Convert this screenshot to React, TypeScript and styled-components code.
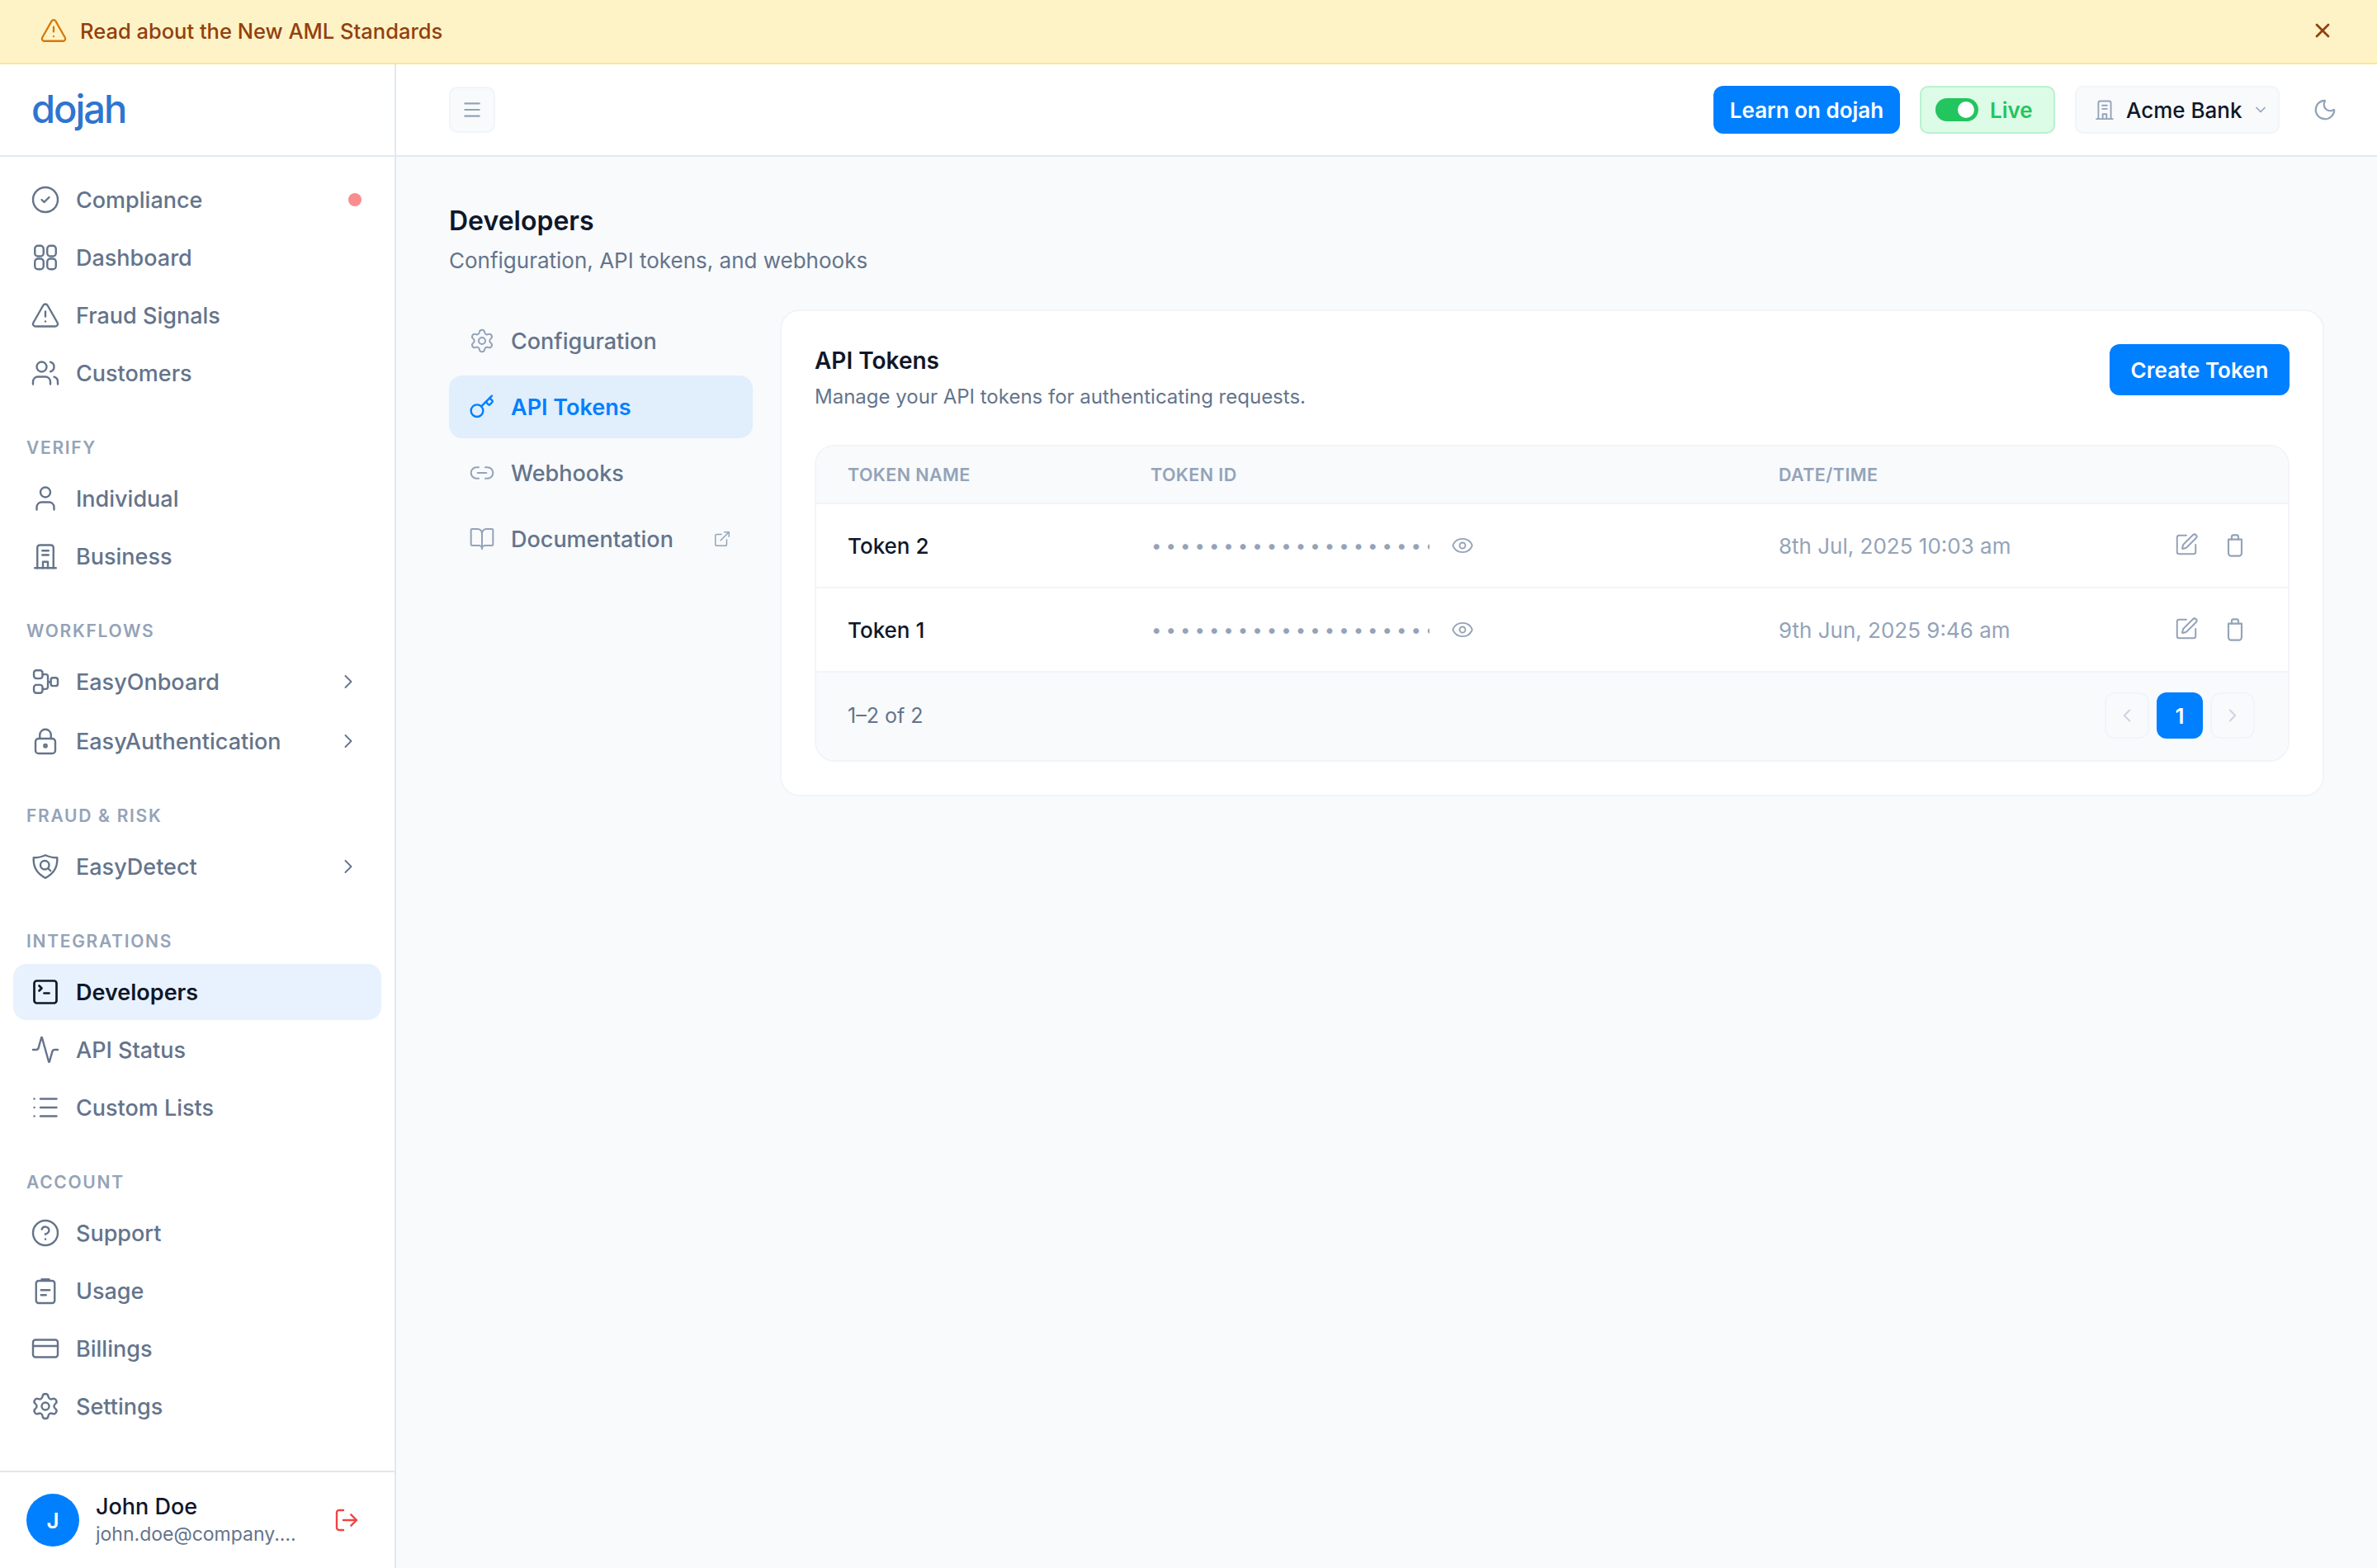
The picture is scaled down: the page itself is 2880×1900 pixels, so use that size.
import React from 'react';
import styled, { createGlobalStyle } from 'styled-components';
import {
  Activity,
  BookOpen,
  ChevronDown,
  ChevronLeft,
  ChevronRight,
  CircleCheck,
  CircleHelp,
  CreditCard,
  ExternalLink,
  Eye,
  Key,
  Link2,
  List,
  LogOut,
  Menu,
  Moon,
  Settings,
  SquarePen,
  SquareTerminal,
  TriangleAlert,
  User,
  Users,
  X,
} from 'lucide-react';

const GlobalStyle = createGlobalStyle`
  * { box-sizing: border-box; }
  html, body { margin: 0; padding: 0; }
  body {
    font-family: Inter, "Noto Sans", sans-serif;
    background-color: #f8fafc;
    color: #0f172a;
  }
`;

const Page = styled.div`
  display: flex;
  flex-direction: column;
  height: 1900px;
  width: 2880px;
  overflow: hidden;
`;

const Banner = styled.div`
  display: flex;
  align-items: center;
  justify-content: space-between;
  flex: 0 0 78px;
  padding: 0 52px 2px 48px;
  background-color: #fef3c7;
  border-bottom: 2px solid #fde68a;
  color: #92400e;
`;

const BannerText = styled.div`
  display: flex;
  align-items: center;
  gap: 15px;
  font-size: 25.5px;
  font-weight: 500;
  svg { color: #d97706; }
`;

const Shell = styled.div`
  display: flex;
  flex: 1;
  min-height: 0;
`;

const Sidebar = styled.aside`
  display: flex;
  flex-direction: column;
  flex: 0 0 480px;
  background-color: #fff;
  border-right: 2px solid #e2e8f0;
`;

const LogoBar = styled.div`
  display: flex;
  align-items: center;
  flex: 0 0 112px;
  padding: 0 0 4px 38px;
  border-bottom: 2px solid #e2e8f0;
`;

const Logo = styled.div`
  font-size: 47px;
  font-weight: 500;
  letter-spacing: -2px;
  color: #2f74d0;
`;

const Nav = styled.nav`
  flex: 1;
  padding: 18px 16px 0;
`;

const Group = styled.div<{ $gap?: number }>`
  display: flex;
  flex-direction: column;
  gap: ${props => props.$gap ?? 2}px;
`;

const GroupLabel = styled.div`
  display: flex;
  align-items: center;
  height: 32px;
  margin: 40px 0 12px 16px;
  font-size: 21px;
  font-weight: 600;
  letter-spacing: 1.7px;
  color: #94a3b8;
`;

const NavItem = styled.div<{ $active?: boolean }>`
  display: flex;
  align-items: center;
  gap: 19px;
  height: 68px;
  padding: 0 26px 0 21px;
  border-radius: 16px;
  font-size: 27px;
  font-weight: 500;
  background-color: ${props => (props.$active ? '#e8f2fe' : 'transparent')};
  color: ${props => (props.$active ? '#0f172a' : '#64748b')};
  font-weight: ${props => (props.$active ? 600 : 500)};
`;

const NavLabel = styled.span`
  flex: 1;
`;

const AlertDot = styled.span`
  width: 16px;
  height: 16px;
  margin-right: -2px;
  border-radius: 50%;
  background-color: #f87171;
  opacity: 0.8;
`;

const UserBar = styled.div`
  display: flex;
  align-items: center;
  flex: 0 0 118px;
  padding: 0 42px 0 32px;
  border-top: 2px solid #e2e8f0;
`;

const Avatar = styled.div`
  display: flex;
  align-items: center;
  justify-content: center;
  flex: 0 0 64px;
  height: 64px;
  border-radius: 50%;
  background-color: #007fff;
  color: #fff;
  font-size: 26px;
  font-weight: 600;
`;

const UserInfo = styled.div`
  flex: 1;
  margin-left: 20px;
  min-width: 0;
`;

const UserName = styled.div`
  font-size: 27px;
  font-weight: 500;
  line-height: 34px;
  color: #0f172a;
`;

const UserMail = styled.div`
  width: 248px;
  font-size: 23px;
  line-height: 32px;
  color: #64748b;
  white-space: nowrap;
  overflow: hidden;
  text-overflow: ellipsis;
`;

const Main = styled.main`
  display: flex;
  flex-direction: column;
  flex: 1;
  min-width: 0;
`;

const TopBar = styled.header`
  display: flex;
  align-items: center;
  flex: 0 0 112px;
  padding: 0 48px 0 64px;
  background-color: #fff;
  border-bottom: 2px solid #e2e8f0;
`;

const MenuButton = styled.div`
  display: flex;
  align-items: center;
  justify-content: center;
  width: 56px;
  height: 56px;
  border-radius: 10px;
  background-color: #f8fafc;
  border: 2px solid #f1f5f9;
  color: #94a3b8;
`;

const TopActions = styled.div`
  display: flex;
  align-items: center;
  margin-left: auto;
`;

const PrimaryButton = styled.div<{ $width: number; $height: number }>`
  display: flex;
  align-items: center;
  justify-content: center;
  width: ${props => props.$width}px;
  height: ${props => props.$height}px;
  border-radius: 12px;
  background-color: #007fff;
  color: #fff;
  font-size: 26px;
  font-weight: 600;
`;

const LiveBadge = styled.div`
  display: flex;
  align-items: center;
  gap: 14px;
  width: 164px;
  height: 58px;
  margin-left: 24px;
  padding-left: 17px;
  border-radius: 10px;
  background-color: #dcfce7;
  border: 2px solid #bbf0cf;
  color: #22c55e;
  font-size: 26px;
  font-weight: 600;
`;

const Toggle = styled.div`
  display: flex;
  align-items: center;
  justify-content: flex-end;
  width: 52px;
  height: 28px;
  padding-right: 5px;
  border-radius: 14px;
  background-color: #22c55e;
  &::after {
    content: '';
    width: 20px;
    height: 20px;
    border-radius: 50%;
    background-color: #fff;
  }
`;

const BankSelect = styled.div`
  display: flex;
  align-items: center;
  width: 248px;
  height: 58px;
  margin-left: 24px;
  padding-left: 20px;
  border-radius: 10px;
  background-color: #f8fafc;
  border: 2px solid #f1f5f9;
  font-size: 26px;
  font-weight: 500;
  color: #0f172a;
  svg { color: #94a3b8; flex: none; }
`;

const BankName = styled.span`
  margin: 0 12px 0 12px;
`;

const MoonSlot = styled.div`
  display: flex;
  margin-left: 40px;
  color: #94a3b8;
`;

const Content = styled.div`
  flex: 1;
  padding: 56px 64px 0;
`;

const PageTitle = styled.h1`
  margin: 0;
  font-size: 32px;
  line-height: 44px;
  font-weight: 600;
  color: #0f172a;
`;

const PageSubtitle = styled.p`
  margin: 6px 0 0;
  font-size: 26px;
  line-height: 40px;
  color: #64748b;
`;

const Body = styled.div`
  display: flex;
  gap: 33px;
  margin-top: 39px;
  align-items: flex-start;
`;

const SubNav = styled.div`
  display: flex;
  flex-direction: column;
  gap: 4px;
  flex: 0 0 368px;
`;

const SubNavItem = styled.div<{ $active?: boolean }>`
  display: flex;
  align-items: center;
  gap: 19px;
  height: 76px;
  padding: 0 26px 0 24px;
  border-radius: 16px;
  font-size: 27px;
  font-weight: 500;
  background-color: ${props => (props.$active ? '#e1eefc' : 'transparent')};
  color: ${props => (props.$active ? '#007fff' : '#64748b')};
  font-weight: ${props => (props.$active ? 600 : 500)};
  > svg:first-child { color: ${props => (props.$active ? '#007fff' : '#94a3b8')}; }
`;

const ExternalSlot = styled.span`
  display: flex;
  margin-left: auto;
  color: #94a3b8;
`;

const Card = styled.section`
  flex: 1;
  min-width: 0;
  padding: 40px;
  background-color: #fff;
  border: 2px solid #f1f5f9;
  border-radius: 24px;
`;

const CardHead = styled.div`
  display: flex;
  justify-content: space-between;
  align-items: flex-start;
  margin-bottom: 40px;
`;

const CardTitle = styled.h2`
  margin: 0;
  font-size: 28px;
  line-height: 40px;
  font-weight: 600;
  color: #0f172a;
`;

const CardSubtitle = styled.p`
  margin: 6px 0 0;
  font-size: 24px;
  line-height: 36px;
  color: #64748b;
`;

const Table = styled.div`
  border: 2px solid #f1f5f9;
  border-radius: 24px;
  overflow: hidden;
`;

const Row = styled.div`
  display: grid;
  grid-template-columns: 367px 761px 1fr auto;
  align-items: center;
  height: 102px;
  padding: 0 48px 0 38px;
  border-bottom: 2px solid #f1f5f9;
`;

const HeadRow = styled(Row)`
  height: 70px;
  background-color: #f8fafc;
`;

const HeadCell = styled.div`
  font-size: 21.5px;
  font-weight: 600;
  letter-spacing: 0.4px;
  color: #94a3b8;
`;

const TokenName = styled.div`
  font-size: 26px;
  font-weight: 500;
  color: #0f172a;
`;

const TokenId = styled.div`
  display: flex;
  align-items: center;
  color: #94a3b8;
`;

const Dots = styled.span`
  width: 337px;
  margin-left: 1px;
  margin-right: 26px;
  font-size: 22px;
  letter-spacing: 5.1px;
  white-space: nowrap;
  overflow: hidden;
`;

const DateCell = styled.div`
  font-size: 26px;
  color: #94a3b8;
`;

const RowActions = styled.div`
  display: flex;
  gap: 28px;
  color: #94a3b8;
`;

const TableFoot = styled.div`
  display: flex;
  align-items: center;
  justify-content: space-between;
  height: 106px;
  padding: 0 40px 2px 38px;
  background-color: #f8fafc;
  font-size: 25px;
  color: #64748b;
`;

const Pager = styled.div`
  display: flex;
  gap: 9px;
`;

const PagerButton = styled.div<{ $current?: boolean }>`
  display: flex;
  align-items: center;
  justify-content: center;
  width: ${props => (props.$current ? 56 : 54)}px;
  height: 56px;
  border-radius: 12px;
  font-size: 26px;
  font-weight: 600;
  border: ${props => (props.$current ? 'none' : '2px solid #f1f5f9')};
  background-color: ${props => (props.$current ? '#007fff' : 'transparent')};
  color: ${props => (props.$current ? '#fff' : '#cbd5e1')};
`;

type IconProps = { size?: number };

const Line: React.FC<IconProps & { children: React.ReactNode }> = ({ size = 36, children }) => (
  <svg
    width={size}
    height={size}
    viewBox="0 0 24 24"
    fill="none"
    stroke="currentColor"
    strokeWidth={1.6}
    strokeLinecap="round"
    strokeLinejoin="round"
    style={{ flex: 'none' }}
  >
    {children}
  </svg>
);

const GridIcon = () => (
  <Line>
    <rect x="3.5" y="2.5" width="7" height="8.5" rx="2.5" />
    <rect x="13.5" y="2.5" width="7" height="8.5" rx="2.5" />
    <rect x="3.5" y="13" width="7" height="8.5" rx="2.5" />
    <rect x="13.5" y="13" width="7" height="8.5" rx="2.5" />
  </Line>
);

const BuildingIcon: React.FC<IconProps> = ({ size }) => (
  <Line size={size}>
    <path d="M3.5 21.5h17" />
    <path d="M5.5 21.5V5a2 2 0 0 1 2-2h9a2 2 0 0 1 2 2v16.5" />
    <path d="M9.5 7.5h5M9.5 11h5" />
    <path d="M10 21.5v-5h4v5" />
  </Line>
);

const FlowIcon = () => (
  <Line>
    <rect x="2.7" y="2.8" width="7" height="6.6" rx="2" />
    <rect x="2.7" y="14.6" width="7" height="6.6" rx="2" />
    <rect x="16.4" y="8.8" width="5.6" height="6.6" rx="1.8" />
    <path d="M9.7 6.1h2.8a1.5 1.5 0 0 1 1.5 1.5v2.9a1.5 1.5 0 0 0 2.4 1.5" />
    <path d="M9.7 17.9h2.8a1.5 1.5 0 0 0 1.5-1.5v-3.9" />
  </Line>
);

const LockIcon = () => (
  <Line>
    <rect x="4" y="10" width="16" height="12" rx="2.5" />
    <path d="M7.5 10V7a4.5 4.5 0 0 1 9 0v3" />
    <circle cx="12" cy="15.8" r="1.1" />
  </Line>
);

const ShieldSearchIcon = () => (
  <Line>
    <path d="M12 2.8c3 1.5 6.3 2 9.5 2 .5 7-2.2 12.8-9.5 16.4C4.700 17.600 2 11.800 2.500 4.800c3.200 0 6.500-.5 9.500-2Z" />
    <circle cx="11.500" cy="10.800" r="3.500" />
    <path d="m14.200 13.500 2 2" />
  </Line>
);

const ClipboardIcon = () => (
  <Line>
    <rect x="4.500" y="4" width="15" height="18" rx="2" />
    <path d="M9 2.800h6" />
    <path d="M8.500 11.500h7M8.500 15.500h4" />
  </Line>
);

const TrashIcon = () => (
  <Line size={32}>
    <path d="M6 6.500h12V19a2.500 2.500 0 0 1-2.500 2.500h-7A2.500 2.500 0 0 1 6 19Z" />
    <path d="M9 6.500V4a1.500 1.500 0 0 1 1.500-1.500h3A1.500 1.500 0 0 1 15 4v2.500" />
  </Line>
);

const mainItems = [
  { label: 'Compliance', icon: <CircleCheck size={36} strokeWidth={1.6} />, alert: true },
  { label: 'Dashboard', icon: <GridIcon /> },
  { label: 'Fraud Signals', icon: <TriangleAlert size={36} strokeWidth={1.6} /> },
  { label: 'Customers', icon: <Users size={36} strokeWidth={1.6} /> },
];

const tokens = [
  { name: 'Token 2', date: '8th Jul, 2025 10:03 am' },
  { name: 'Token 1', date: '9th Jun, 2025 9:46 am' },
];

const App: React.FC = () => {
  return (
    <Page>
      <GlobalStyle />
      <Banner>
        <BannerText>
          <TriangleAlert size={34} strokeWidth={1.6} />
          Read about the New AML Standards
        </BannerText>
        <X size={28} strokeWidth={2.4} />
      </Banner>
      <Shell>
        <Sidebar>
          <LogoBar>
            <Logo>dojah</Logo>
          </LogoBar>
          <Nav>
            <Group>
              {mainItems.map(item => (
                <NavItem key={item.label}>
                  {item.icon}
                  <NavLabel>{item.label}</NavLabel>
                  {item.alert && <AlertDot />}
                </NavItem>
              ))}
            </Group>

            <GroupLabel>VERIFY</GroupLabel>
            <Group>
              <NavItem><User size={36} strokeWidth={1.6} /><NavLabel>Individual</NavLabel></NavItem>
              <NavItem><BuildingIcon /><NavLabel>Business</NavLabel></NavItem>
            </Group>

            <GroupLabel>WORKFLOWS</GroupLabel>
            <Group $gap={4}>
              <NavItem><FlowIcon /><NavLabel>EasyOnboard</NavLabel><ChevronRight size={28} strokeWidth={1.6} /></NavItem>
              <NavItem><LockIcon /><NavLabel>EasyAuthentication</NavLabel><ChevronRight size={28} strokeWidth={1.6} /></NavItem>
            </Group>

            <GroupLabel>FRAUD &amp; RISK</GroupLabel>
            <Group>
              <NavItem><ShieldSearchIcon /><NavLabel>EasyDetect</NavLabel><ChevronRight size={28} strokeWidth={1.6} /></NavItem>
            </Group>

            <GroupLabel>INTEGRATIONS</GroupLabel>
            <Group>
              <NavItem $active><SquareTerminal size={36} strokeWidth={1.8} /><NavLabel>Developers</NavLabel></NavItem>
              <NavItem><Activity size={36} strokeWidth={1.6} /><NavLabel>API Status</NavLabel></NavItem>
              <NavItem><List size={36} strokeWidth={1.6} /><NavLabel>Custom Lists</NavLabel></NavItem>
            </Group>

            <GroupLabel>ACCOUNT</GroupLabel>
            <Group>
              <NavItem><CircleHelp size={36} strokeWidth={1.6} /><NavLabel>Support</NavLabel></NavItem>
              <NavItem><ClipboardIcon /><NavLabel>Usage</NavLabel></NavItem>
              <NavItem><CreditCard size={36} strokeWidth={1.6} /><NavLabel>Billings</NavLabel></NavItem>
              <NavItem><Settings size={36} strokeWidth={1.6} /><NavLabel>Settings</NavLabel></NavItem>
            </Group>
          </Nav>
          <UserBar>
            <Avatar>J</Avatar>
            <UserInfo>
              <UserName>John Doe</UserName>
              <UserMail>john.doe@company.com</UserMail>
            </UserInfo>
            <LogOut size={32} strokeWidth={1.8} color="#ef4444" />
          </UserBar>
        </Sidebar>

        <Main>
          <TopBar>
            <MenuButton>
              <Menu size={26} strokeWidth={2} />
            </MenuButton>
            <TopActions>
              <PrimaryButton $width={226} $height={58}>Learn on dojah</PrimaryButton>
              <LiveBadge>
                <Toggle />
                Live
              </LiveBadge>
              <BankSelect>
                <BuildingIcon size={28} />
                <BankName>Acme Bank</BankName>
                <ChevronDown size={20} strokeWidth={2} />
              </BankSelect>
              <MoonSlot>
                <Moon size={30} strokeWidth={1.8} />
              </MoonSlot>
            </TopActions>
          </TopBar>

          <Content>
            <PageTitle>Developers</PageTitle>
            <PageSubtitle>Configuration, API tokens, and webhooks</PageSubtitle>
            <Body>
              <SubNav>
                <SubNavItem><Settings size={32} strokeWidth={1.5} />Configuration</SubNavItem>
                <SubNavItem $active><Key size={32} strokeWidth={1.8} />API Tokens</SubNavItem>
                <SubNavItem><Link2 size={32} strokeWidth={1.5} />Webhooks</SubNavItem>
                <SubNavItem>
                  <BookOpen size={32} strokeWidth={1.5} />
                  Documentation
                  <ExternalSlot><ExternalLink size={22} strokeWidth={1.6} /></ExternalSlot>
                </SubNavItem>
              </SubNav>

              <Card>
                <CardHead>
                  <div>
                    <CardTitle>API Tokens</CardTitle>
                    <CardSubtitle>Manage your API tokens for authenticating requests.</CardSubtitle>
                  </div>
                  <PrimaryButton $width={218} $height={62}>Create Token</PrimaryButton>
                </CardHead>

                <Table>
                  <HeadRow>
                    <HeadCell>TOKEN NAME</HeadCell>
                    <HeadCell>TOKEN ID</HeadCell>
                    <HeadCell>DATE/TIME</HeadCell>
                  </HeadRow>
                  {tokens.map(token => (
                    <Row key={token.name}>
                      <TokenName>{token.name}</TokenName>
                      <TokenId>
                        <Dots>{'•'.repeat(24)}</Dots>
                        <Eye size={28} strokeWidth={1.6} />
                      </TokenId>
                      <DateCell>{token.date}</DateCell>
                      <RowActions>
                        <SquarePen size={30} strokeWidth={1.6} />
                        <TrashIcon />
                      </RowActions>
                    </Row>
                  ))}
                  <TableFoot>
                    <span>1–2 of 2</span>
                    <Pager>
                      <PagerButton><ChevronLeft size={26} strokeWidth={1.8} /></PagerButton>
                      <PagerButton $current>1</PagerButton>
                      <PagerButton><ChevronRight size={26} strokeWidth={1.8} /></PagerButton>
                    </Pager>
                  </TableFoot>
                </Table>
              </Card>
            </Body>
          </Content>
        </Main>
      </Shell>
    </Page>
  );
};

export default App;
